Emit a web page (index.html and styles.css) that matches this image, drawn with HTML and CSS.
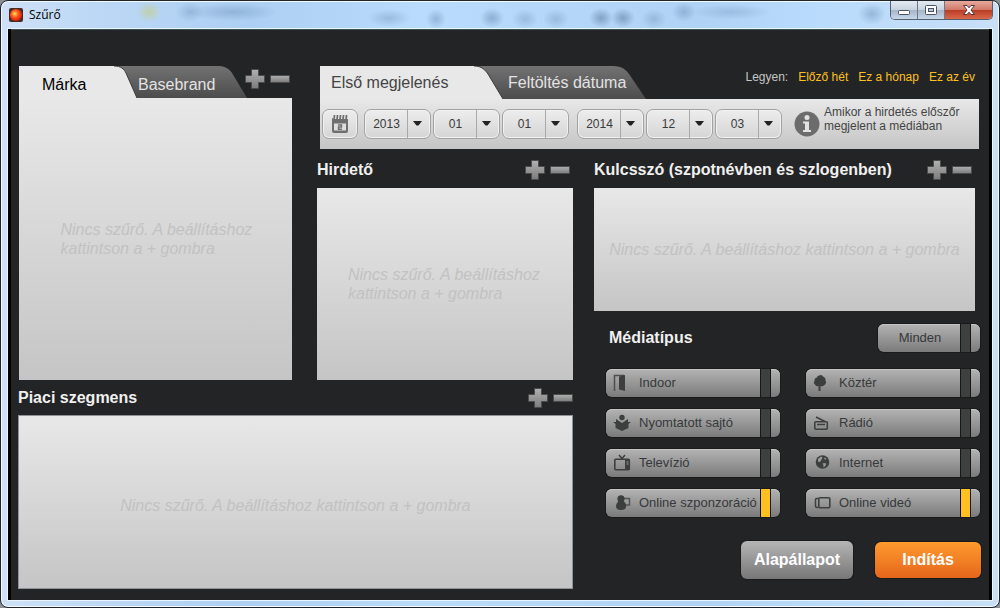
FILE: index.html
```html
<!DOCTYPE html>
<html lang="hu">
<head>
<meta charset="utf-8">
<title>Szűrő</title>
<link rel="stylesheet" href="styles.css">
</head>
<body>
<svg class="defs" width="0" height="0" aria-hidden="true">
  <defs>
    <linearGradient id="metal" x1="0" y1="0" x2="0" y2="1"><stop offset="0" stop-color="#b0b0b0"/><stop offset="1" stop-color="#7c7c7c"/></linearGradient>
    <linearGradient id="tabdark" x1="0" y1="0" x2="0" y2="1"><stop offset="0" stop-color="#727272"/><stop offset="1" stop-color="#4c4c4c"/></linearGradient>
    <radialGradient id="glow" cx=".4" cy=".4" r=".65"><stop offset="0" stop-color="#ffe05a"/><stop offset=".45" stop-color="#ff5a1c"/><stop offset="1" stop-color="#d01505"/></radialGradient>
    <symbol id="plus" viewBox="0 0 20 20"><path d="M6.500 .5h7v6h6v7h-6v6h-7v-6h-6v-7h6z" fill="url(#metal)" stroke="#4b4b4c"/></symbol>
    <symbol id="minus" viewBox="0 0 20 20"><path d="M.5 6.500h19v7H.5z" fill="url(#metal)" stroke="#4b4b4c"/></symbol>
  </defs>
</svg>
<div class="window">
  <header class="titlebar">
    <svg class="app-icon" viewBox="0 0 14 14"><rect width="14" height="14" rx="2" fill="#4a2a26"/><circle cx="7" cy="7" r="6" fill="url(#glow)"/></svg>
    <span class="title">Szűrő</span>
    <div class="caption">
      <button class="cap cap-min" aria-label="Kis méret"><svg viewBox="0 0 14 12"><rect x="1.500" y="6.500" width="11" height="4" rx="1" fill="#fff" stroke="#4a5263"/></svg></button>
      <button class="cap cap-max" aria-label="Teljes méret"><svg viewBox="0 0 14 12"><rect x="1.500" y="1.500" width="11" height="9" rx="1" fill="#fff" stroke="#4a5263"/><rect x="4.500" y="4.500" width="5" height="3" fill="#b9c8dc" stroke="#4a5263"/></svg></button>
      <button class="cap cap-close" aria-label="Bezárás"><svg viewBox="0 0 14 12"><path d="M1.500 1.500h3.500L7 3.800 9 1.500h3.500L9 6l3.500 4.500H9L7 8.200 5 10.500H1.500L5 6z" fill="#fff" stroke="#56323a"/></svg></button>
    </div>
  </header>

  <main class="content">
    <section class="brand">
      <div class="tabs brand-tabs">
        <button class="tab tab-active"><svg class="shape" viewBox="0 0 118 32" preserveAspectRatio="none"><path d="M0 0H95C102 0 105 3 107 7L118 32H0Z" fill="#e8e8e8"/><path d="M95 0C102 0 105 3 107 7L118 32" fill="none" stroke="#3a3a3a"/></svg><span>Márka</span></button>
        <button class="tab tab-back"><svg class="shape" viewBox="0 0 136 32" preserveAspectRatio="none"><path d="M0 0H108C115 0 119 4 121 7L136 32H0Z" fill="url(#tabdark)"/></svg><span>Basebrand</span></button>
        <div class="tools">
          <button class="tool" aria-label="Hozzáadás"><svg><use href="#plus"/></svg></button>
          <button class="tool" aria-label="Törlés"><svg><use href="#minus"/></svg></button>
        </div>
      </div>
      <div class="box"><p class="hint">Nincs szűrő. A beállításhoz kattintson a + gombra</p></div>
    </section>

    <section class="dates">
      <div class="date-head">
        <div class="tabs date-tabs">
          <button class="tab tab-active"><svg class="shape" viewBox="0 0 183 33" preserveAspectRatio="none"><path d="M0 0H154C162 0 165 4 168 8L183 33H0Z" fill="#e8e8e8"/><path d="M154 0C162 0 165 4 168 8L183 33" fill="none" stroke="#3a3a3a"/></svg><span>Első megjelenés</span></button>
          <button class="tab tab-back"><svg class="shape" viewBox="0 0 173 33" preserveAspectRatio="none"><path d="M0 0H140C149 0 153 4 156 8L173 33H0Z" fill="url(#tabdark)"/></svg><span>Feltöltés dátuma</span></button>
        </div>
        <nav class="presets"><span>Legyen:</span><a href="#">Előző hét</a><a href="#">Ez a hónap</a><a href="#">Ez az év</a></nav>
      </div>
      <div class="date-bar">
        <button class="calendar" aria-label="Naptár"><svg viewBox="0 0 18 18"><path d="M1 4Q1 3 2 3H16Q17 3 17 4V16Q17 18 15 18H3Q1 18 1 16Z" fill="#6f6f6f"/><path d="M3 8.500H15V15.500H3Z" fill="#dedede"/><path d="M3.500 0v4M6.500 0v4M9.500 0v4M12.500 0v4M15.500 0v4" stroke="#e3e3e3" stroke-width="3"/><path d="M3.500 0 3 5M6.500 0 6 5M9.500 0 9 5M12.500 0 12 5M15.500 0 15 5" stroke="#6f6f6f" stroke-width="1.700"/><path d="M7 10h3.500v2H7.500v2.200H11" fill="none" stroke="#6f6f6f" stroke-width="1.400"/></svg></button>
        <div class="date-group">
          <div class="pick"><select aria-label="Kezdő év"><option>2013</option></select><svg class="arrow" viewBox="0 0 9 5"><path d="M0 0H9L5.500 4.500H3.500Z" fill="#222"/></svg></div>
          <div class="pick"><select aria-label="Kezdő hónap"><option>01</option></select><svg class="arrow" viewBox="0 0 9 5"><path d="M0 0H9L5.500 4.500H3.500Z" fill="#222"/></svg></div>
          <div class="pick"><select aria-label="Kezdő nap"><option>01</option></select><svg class="arrow" viewBox="0 0 9 5"><path d="M0 0H9L5.500 4.500H3.500Z" fill="#222"/></svg></div>
        </div>
        <div class="date-group">
          <div class="pick"><select aria-label="Záró év"><option>2014</option></select><svg class="arrow" viewBox="0 0 9 5"><path d="M0 0H9L5.500 4.500H3.500Z" fill="#222"/></svg></div>
          <div class="pick"><select aria-label="Záró hónap"><option>12</option></select><svg class="arrow" viewBox="0 0 9 5"><path d="M0 0H9L5.500 4.500H3.500Z" fill="#222"/></svg></div>
          <div class="pick"><select aria-label="Záró nap"><option>03</option></select><svg class="arrow" viewBox="0 0 9 5"><path d="M0 0H9L5.500 4.500H3.500Z" fill="#222"/></svg></div>
        </div>
        <svg class="info-icon" viewBox="0 0 26 26"><circle cx="13" cy="13" r="12.500" fill="#6c6c6c"/><circle cx="13" cy="6.500" r="2.500" fill="#e2e2e2"/><path d="M9 10.500h6v8.500h2v2H9v-2h2v-6.500H9z" fill="#e2e2e2"/></svg>
        <p class="info">Amikor a hirdetés előszőr megjelent a médiában</p>
      </div>
    </section>

    <section class="advertiser">
      <div class="head"><h2>Hirdető</h2>
        <div class="tools">
          <button class="tool" aria-label="Hozzáadás"><svg><use href="#plus"/></svg></button>
          <button class="tool" aria-label="Törlés"><svg><use href="#minus"/></svg></button>
        </div>
      </div>
      <div class="box"><p class="hint">Nincs szűrő. A beállításhoz kattintson a + gombra</p></div>
    </section>

    <section class="segment">
      <div class="head"><h2>Piaci szegmens</h2>
        <div class="tools">
          <button class="tool" aria-label="Hozzáadás"><svg><use href="#plus"/></svg></button>
          <button class="tool" aria-label="Törlés"><svg><use href="#minus"/></svg></button>
        </div>
      </div>
      <div class="box"><p class="hint hint-line">Nincs szűrő. A beállításhoz kattintson a + gombra</p></div>
    </section>

    <div class="side">
      <section class="keyword">
        <div class="head"><h2>Kulcsszó (szpotnévben és szlogenben)</h2>
          <div class="tools">
            <button class="tool" aria-label="Hozzáadás"><svg><use href="#plus"/></svg></button>
            <button class="tool" aria-label="Törlés"><svg><use href="#minus"/></svg></button>
          </div>
        </div>
        <div class="box"><p class="hint hint-line">Nincs szűrő. A beállításhoz kattintson a + gombra</p></div>
      </section>
      <section class="media">
        <div class="media-head"><h2>Médiatípus</h2>
          <label class="toggle toggle-all"><span>Minden</span><input type="checkbox"></label>
        </div>
        <div class="toggles">
          <label class="toggle"><svg viewBox="0 0 18 18"><path d="M1.500 17V1.500H11" fill="none" stroke="#4d4f4f" stroke-width="1.500"/><path d="M6 2.500 12 1V17L6 15.500Z" fill="#3d3f3f"/></svg><span>Indoor</span><input type="checkbox"></label>
          <label class="toggle"><svg viewBox="0 0 18 18"><path d="M6 1.500Q9 0 10 2.500 13 4 12.500 6.500 14 9 11.500 11 9.500 13 7.500 12V17H5.500V12Q3 13 2 10.500 0 9 1.500 7 1 4 4 3.500 4 2 6 1.500Z" fill="#3d3f3f"/></svg><span>Köztér</span><input type="checkbox"></label>
          <label class="toggle"><svg viewBox="0 0 18 18"><circle cx="9" cy="3.500" r="2.700" fill="#3d3f3f"/><path d="M3 5 9 9 15 5V8H18L15.500 10V14L9 17 2.500 14V10L0 8H3Z" fill="#3d3f3f"/></svg><span>Nyomtatott sajtó</span><input type="checkbox"></label>
          <label class="toggle"><svg viewBox="0 0 18 18"><rect x="1.800" y="7.800" width="12.500" height="7.500" rx="1" fill="none" stroke="#3d3f3f" stroke-width="1.600"/><path d="M3 3 12 7.500M4 10.500h8" fill="none" stroke="#3d3f3f" stroke-width="1.500"/></svg><span>Rádió</span><input type="checkbox"></label>
          <label class="toggle"><svg viewBox="0 0 18 18"><rect x="1.800" y="5.300" width="14.500" height="10.500" rx="1" fill="none" stroke="#3d3f3f" stroke-width="1.600"/><path d="M12 5h4.500v11H12z" fill="#3d3f3f"/><path d="M6 1 9 4.500 12 1" fill="none" stroke="#3d3f3f" stroke-width="1.500"/><path d="M13.500 8h2M13.500 10h2" stroke="#999"/></svg><span>Televízió</span><input type="checkbox"></label>
          <label class="toggle"><svg viewBox="0 0 18 18"><circle cx="9.500" cy="8" r="6.800" fill="#3d3f3f"/><path d="M5 5 8 2.500 9.500 3.500 8.500 5.500 7 8 5 7.500ZM11 3.500 13.500 4.500 12 6ZM9.500 9.500 12.500 9 13 11 10.500 13.500 10.500 11Z" fill="#9b9b9b"/></svg><span>Internet</span><input type="checkbox"></label>
          <label class="toggle"><svg viewBox="0 0 18 18"><path d="M11 4.500h5.500V11H13" fill="none" stroke="#555" stroke-width="1.500"/><circle cx="8" cy="4.800" r="3.600" fill="#3d3f3f"/><path d="M5.500 7H10.500Q14 10 13 13 12.500 16 8.500 16 3.500 16 3 13 2.500 10 5.500 7Z" fill="#3d3f3f"/></svg><span>Online szponzoráció</span><input type="checkbox" checked></label>
          <label class="toggle"><svg viewBox="0 0 18 18"><rect x="5.800" y="3.800" width="11" height="10" rx="1" fill="none" stroke="#3d3f3f" stroke-width="1.600"/><path d="M5 4.500H3.500Q2.500 4.500 2.500 6V12Q2.500 13.500 4 13.500H5" fill="none" stroke="#3d3f3f" stroke-width="1.500"/></svg><span>Online videó</span><input type="checkbox" checked></label>
        </div>
      </section>
      <div class="actions">
        <button class="action reset">Alapállapot</button>
        <button class="action start">Indítás</button>
      </div>
    </div>
  </main>
</div>
</body>
</html>
```
FILE: styles.css
```css
* { box-sizing: border-box; }
body {
  margin: 0;
  background: #8b8f94;
  font-family: "Liberation Sans", Arial, sans-serif;
  font-size: 16px;
  color: #f0f0f0;
}
button, select, input { font: inherit; margin: 0; }
button { border: 0; padding: 0; background: none; cursor: pointer; }
h2, p { margin: 0; }
h2 { font-size: 16px; line-height: 20px; font-weight: bold; }
.defs { position: absolute; }

/* Window frame */
.window {
  min-height: 100vh;
  display: flex;
  flex-direction: column;
  padding: 0 7px 7px;
  border: 1px solid #20242c;
  border-radius: 8px;
  box-shadow: inset 0 0 0 1px #f4faff;
  background:
    radial-gradient(ellipse 12px 10px at 148px 11px, rgba(200, 205, 120, .6), transparent),
    radial-gradient(ellipse 14px 10px at 189px 11px, rgba(110, 145, 185, .4), transparent),
    radial-gradient(ellipse 46px 9px at 232px 11px, rgba(110, 145, 185, .45), transparent),
    radial-gradient(ellipse 22px 9px at 388px 17px, rgba(110, 145, 185, .4), transparent),
    radial-gradient(ellipse 10px 10px at 435px 18px, rgba(110, 145, 185, .5), transparent),
    radial-gradient(ellipse 12px 10px at 491px 17px, rgba(110, 145, 185, .6), transparent),
    radial-gradient(ellipse 13px 10px at 524px 18px, rgba(110, 145, 185, .4), transparent),
    radial-gradient(ellipse 13px 10px at 555px 18px, rgba(110, 145, 185, .4), transparent),
    radial-gradient(ellipse 12px 10px at 600px 17px, rgba(80, 110, 150, .5), transparent),
    radial-gradient(ellipse 12px 10px at 622px 17px, rgba(80, 110, 150, .5), transparent),
    radial-gradient(ellipse 13px 10px at 653px 18px, rgba(110, 145, 185, .4), transparent),
    radial-gradient(ellipse 12px 10px at 683px 11px, rgba(110, 145, 185, .5), transparent),
    radial-gradient(ellipse 40px 8px at 730px 11px, rgba(110, 145, 185, .35), transparent),
    radial-gradient(ellipse 14px 11px at 871px 13px, rgba(110, 145, 185, .5), transparent),
    linear-gradient(90deg, #cfe1f7 0, #bdd8f5 90px, #accff3 250px, #b9dbfc 420px, #b0d2f5 700px, #b9dbfc 820px, #c8dff7 100%);
}
.titlebar {
  height: 28px;
  display: flex;
  align-items: center;
  padding-left: 1px;
}
.app-icon { width: 14px; height: 14px; margin-right: 6px; }
.title {
  flex: 1;
  font-family: "Open Sans", "Noto Sans", sans-serif;
  font-size: 12px;
  line-height: 20px;
  color: #000;
}
.caption {
  align-self: flex-start;
  display: flex;
  height: 19px;
  margin-right: -1px;
  border: 1px solid #55606f;
  border-top: 0;
  border-radius: 0 0 5px 5px;
  overflow: hidden;
}
.cap {
  width: 27px;
  display: flex;
  align-items: center;
  justify-content: center;
  border-right: 1px solid #6c7889;
  background: linear-gradient(#e3eaf2, #c8d3e0 48%, #a5b4c7 50%, #c7d8ea);
}
.cap svg { width: 14px; height: 12px; }
.cap-close {
  width: 47px;
  border-right: 0;
  background: linear-gradient(#e6aa9d, #d27a69 48%, #b93c24 50%, #d9694b);
}

/* Filter grid */
.content {
  flex: 1;
  display: grid;
  grid-template-columns: minmax(0, 278fr) minmax(0, 256fr) minmax(0, 387fr);
  grid-template-rows: auto 231fr 209fr;
  column-gap: 21px;
  padding: 37px 8px 11px 7px;
  background: #232425;
  border: solid #000;
  border-width: 0 3px;
  outline: 1px solid #e9f4ff;
  box-shadow: inset 0 1px #3d5158;
}
.brand { grid-area: 1 / 1 / 3 / 2; margin: 0 4px 0 1px; }
.dates { grid-area: 1 / 2 / 2 / 4; margin: 0 2px 0 3px; }
.advertiser { grid-area: 2 / 2; }
.segment { grid-area: 3 / 1 / 4 / 3; }
.side { grid-area: 2 / 3 / 4 / 4; }
.brand, .advertiser, .segment, .side, .keyword { display: flex; flex-direction: column; }

.box {
  flex: 1;
  display: flex;
  align-items: center;
  justify-content: center;
  background: linear-gradient(#e8e8e8, #c5c5c5);
}
.segment .box { padding-top: 6px; border: 1px solid #8f9297; }
.brand .box { padding-left: 4px; }
.hint {
  width: 194px;
  font-size: 16px;
  line-height: 19px;
  font-style: italic;
  color: #c2c2c2;
}
.hint-line { width: auto; white-space: nowrap; }

.head {
  display: flex;
  align-items: center;
  justify-content: space-between;
  height: 39px;
  padding: 2px 3px 0 0;
}
.segment .head { height: 35px; padding: 0; }
.tools { display: flex; gap: 5px; }
.tool, .tool svg { display: block; width: 20px; height: 20px; }

/* Tabs */
.tabs { display: flex; }
.tab {
  position: relative;
  text-align: left;
  line-height: 20px;
}
.tab span { position: relative; }
.tab-active { z-index: 1; }
.shape { position: absolute; inset: 0; width: 100%; height: 100%; }
.tab-back { color: #e3e3e3; }
.brand-tabs { height: 32px; }
.brand-tabs .tab-active { width: 118px; padding: 5px 0 0 23px; color: #000; }
.brand-tabs .tab-back { width: 136px; margin-left: -26px; padding: 5px 0 0 27px; }
.brand-tabs .tools { margin: 3px 0 0 -2px; }
.date-head { display: flex; justify-content: space-between; height: 33px; }
.date-tabs .tab-active { width: 183px; padding-left: 11px; color: #444; }
.date-tabs .tab-back { width: 173px; margin-left: -30px; padding-left: 35px; }

.presets {
  display: flex;
  gap: 10px;
  padding: 3px 4px 0 0;
  font-size: 12px;
  line-height: 16px;
  color: #c6c6c6;
}
.presets a { color: #ffc020; text-decoration: none; }

.date-bar {
  display: flex;
  align-items: center;
  height: 50px;
  padding-left: 2px;
  background: linear-gradient(#e8e8e8, #c5c5c5);
}
.calendar, .pick select {
  height: 30px;
  border: 1px solid #a3a3a3;
  border-radius: 7px;
  background: linear-gradient(#ededed, #d5d5d5);
  box-shadow: inset 0 0 0 1px #f1f1f1;
}
.calendar { display: flex; align-items: center; justify-content: center; width: 36px; margin-right: 6px; }
.calendar svg { width: 18px; height: 18px; }
.date-group { display: flex; gap: 2px; margin-right: 8px; }
.pick { position: relative; width: 67px; }
.pick select {
  display: block;
  appearance: none;
  width: 100%;
  padding: 0 22px 0 0;
  font-size: 12px;
  text-align: center;
  text-align-last: center;
  color: #3a3a3a;
}
.pick::after {
  content: "";
  position: absolute;
  top: 1px;
  bottom: 1px;
  right: 23px;
  width: 1px;
  background: #a9a9a9;
}
.arrow { position: absolute; right: 9px; top: 12px; width: 9px; height: 5px; pointer-events: none; }
.info-icon { flex: none; width: 26px; height: 26px; margin: 0 4px; }
.info {
  flex: 1;
  max-width: 145px;
  padding-bottom: 11px;
  font-size: 12px;
  line-height: 14px;
  color: #444;
}

/* Media types */
.keyword { flex: 1; margin-right: 6px; }
.media { margin: 13px 1px 0 12px; }
.media-head { display: flex; justify-content: space-between; align-items: center; padding-left: 3px; }
.toggles {
  display: grid;
  grid-template-columns: minmax(0, 1fr) minmax(0, 1fr);
  gap: 12px 26px;
  margin-top: 17px;
}
.toggle {
  display: flex;
  align-items: center;
  height: 28px;
  padding: 0 9px 0 7px;
  border-radius: 6px;
  overflow: hidden;
  background: linear-gradient(#b3b3b3, #7b7b7b);
  box-shadow: inset 0 1px #c4c4c4, 0 0 0 1px #1a1a1b;
  font-size: 13px;
  line-height: 16px;
  white-space: nowrap;
  color: #36383a;
  cursor: pointer;
}
.toggle svg { flex: none; width: 18px; height: 18px; margin-right: 8px; }
.toggle span { flex: 1; min-width: 0; }
.toggle input {
  appearance: none;
  flex: none;
  width: 11px;
  height: 28px;
  border: solid #161616;
  border-width: 0 1px;
  background: #3e403f;
}
.toggle input:checked { background: #ffc020; }
.toggle-all { width: 102px; padding-left: 2px; }
.toggle-all span { text-align: center; }

.actions {
  display: flex;
  justify-content: flex-end;
  align-items: center;
  gap: 22px;
  margin: 24px 0 10px;
}
.action {
  height: 38px;
  border-radius: 6px;
  font-weight: bold;
  color: #fff;
  box-shadow: 0 0 0 1px #1a1a1b;
}
.reset { width: 112px; background: linear-gradient(#b5b5b5, #777); }
.start { width: 106px; height: 36px; background: linear-gradient(#ff9a2e, #e5661b); }
```
